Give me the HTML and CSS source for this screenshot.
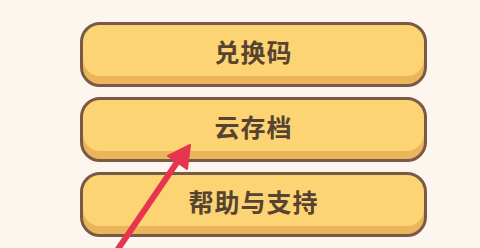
FILE: index.html
```html
<!DOCTYPE html>
<html lang="zh">
  <head>
    <meta charset="UTF-8" />
    <meta name="viewport" content="width=device-width, initial-scale=1.0" />
    <title>设置菜单</title>
    <link rel="stylesheet" href="styles.css">
  </head>
  <body>
    <div class="menu">
      <button class="menu-btn">兑换码</button>
      <button class="menu-btn">云存档</button>
      <button class="menu-btn">帮助与支持</button>
    </div>

    <svg class="pointer" width="480" height="248" viewBox="0 0 480 248">
      <line x1="116" y1="252" x2="180" y2="158" stroke="#e8354f" stroke-width="6" stroke-linecap="round" />
      <polygon points="190,145 168,156 187,169" fill="#e8354f" stroke="#e8354f" stroke-width="2" stroke-linejoin="round" />
    </svg>
  </body>
</html>
```

FILE: styles.css
```css
body {
  margin: 0;
  background-color: #fcf6ee;
  font-family: "Noto Sans CJK SC", "Noto Sans", sans-serif;
  width: 480px;
  height: 248px;
  overflow: hidden;
  position: relative;
}

.menu {
  display: flex;
  flex-direction: column;
  gap: 10px;
  padding: 22px 0 0 80px;
  width: 347px;
}

.menu-btn {
  box-sizing: border-box;
  height: 65px;
  width: 100%;
  display: flex;
  align-items: center;
  justify-content: center;
  padding: 0 0 7px;
  border: 3px solid #7a5a45;
  border-radius: 20px;
  background-color: #fdd473;
  box-shadow: inset 0 -8px 0 #ebb55c;
  color: #574332;
  font-family: inherit;
  font-size: 25px;
  font-weight: 700;
  letter-spacing: 1px;
}

.pointer {
  position: absolute;
  left: 0;
  top: 0;
  pointer-events: none;
}
```
